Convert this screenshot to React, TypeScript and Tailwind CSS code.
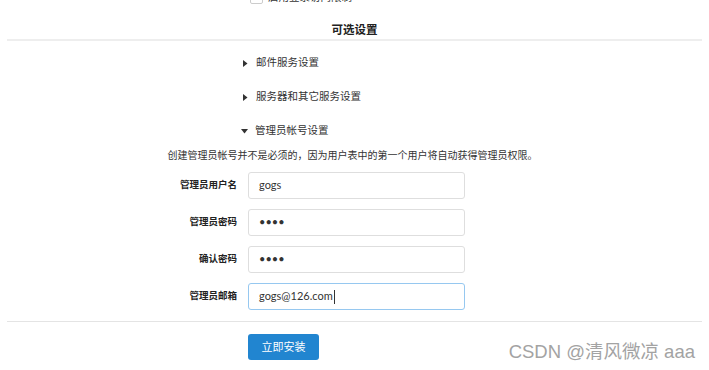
import React from "react";

const font = { fontFamily: 'Lato, "Noto Sans CJK SC", sans-serif' };

function Caret({ open }: { open?: boolean }) {
    return open ? (
        <svg width="7" height="5" viewBox="0 0 7 5" className="mr-[7px]">
            <path d="M0 0 L7 0 L3.5 4.5 Z" fill="#333" />
        </svg>
    ) : (
        <svg width="5" height="7" viewBox="0 0 5 7" className="mr-[8px] ml-[2px]">
            <path d="M0 0 L4.5 3.5 L0 7 Z" fill="#333" />
        </svg>
    );
}

function Field({ label, value, focused }: { label: string; value: string; focused?: boolean }) {
    return (
        <div className="flex items-center h-[37px]">
            <div className="w-[237px] text-right text-[9.5px] font-bold text-[#222]">{label}</div>
            <div
                className={
                    "ml-[11px] w-[217px] h-[27px] rounded-[3px] border bg-white flex items-center px-[10px] text-[11px] text-[#333] " +
                    (focused ? "border-[#96c8f0]" : "border-[#dedede]")
                }
            >
                {value}
                {focused && <span className="w-px h-[14px] bg-[#333] ml-px" />}
            </div>
        </div>
    );
}

export default function App() {
    return (
        <div className="relative w-[709px] h-[370px] bg-white overflow-hidden text-[#333]" style={font}>
            {/* cut-off checkbox row */}
            <div className="h-[4px] overflow-hidden flex items-end pl-[250px]">
                <div className="w-[13px] h-[13px] border border-[#ccc] rounded-[2px] shrink-0" />
                <span className="ml-[5px] text-[10.5px] leading-[13px]">启用登录访问限制</span>
            </div>

            <div className="mt-[19px] text-center text-[11.5px] font-bold leading-[14px] text-[#222]">可选设置</div>
            <div className="mx-[7px] mt-[2px] border-b-2 border-[#eeeeee]" />

            <div className="mt-[5px] pl-[241px] text-[10.5px] text-[#333]">
                <div className="h-[34px] flex items-center">
                    <Caret />
                    邮件服务设置
                </div>
                <div className="h-[34px] flex items-center">
                    <Caret />
                    服务器和其它服务设置
                </div>
                <div className="h-[34px] flex items-center">
                    <Caret open />
                    管理员帐号设置
                </div>
            </div>

            <div className="mt-[-1px] h-[16px] text-center text-[10px] leading-[16px] pr-[4px]">
                创建管理员帐号并不是必须的，因为用户表中的第一个用户将自动获得管理员权限。
            </div>

            <div className="mt-[4px]">
                <Field label="管理员用户名" value="gogs" />
                <Field label="管理员密码" value="••••" />
                <Field label="确认密码" value="••••" />
                <Field label="管理员邮箱" value="gogs@126.com" focused />
            </div>

            <div className="mx-[7px] mt-[6px] border-b border-[#e4e4e4]" />

            <div className="mt-[11px] pl-[248px]">
                <button className="w-[71px] h-[26px] rounded-[3px] bg-[#2185d0] text-white text-[11px]">立即安装</button>
            </div>

            <div
                className="absolute right-[14px] bottom-[9px] text-[18.5px] text-[#a3a3a3] leading-none"
                style={{ fontFamily: 'Arial, "Liberation Sans", "Noto Sans CJK SC", sans-serif', textShadow: "0 0 2px #fff" }}
            >
                CSDN @清风微凉 aaa
            </div>
        </div>
    );
}
